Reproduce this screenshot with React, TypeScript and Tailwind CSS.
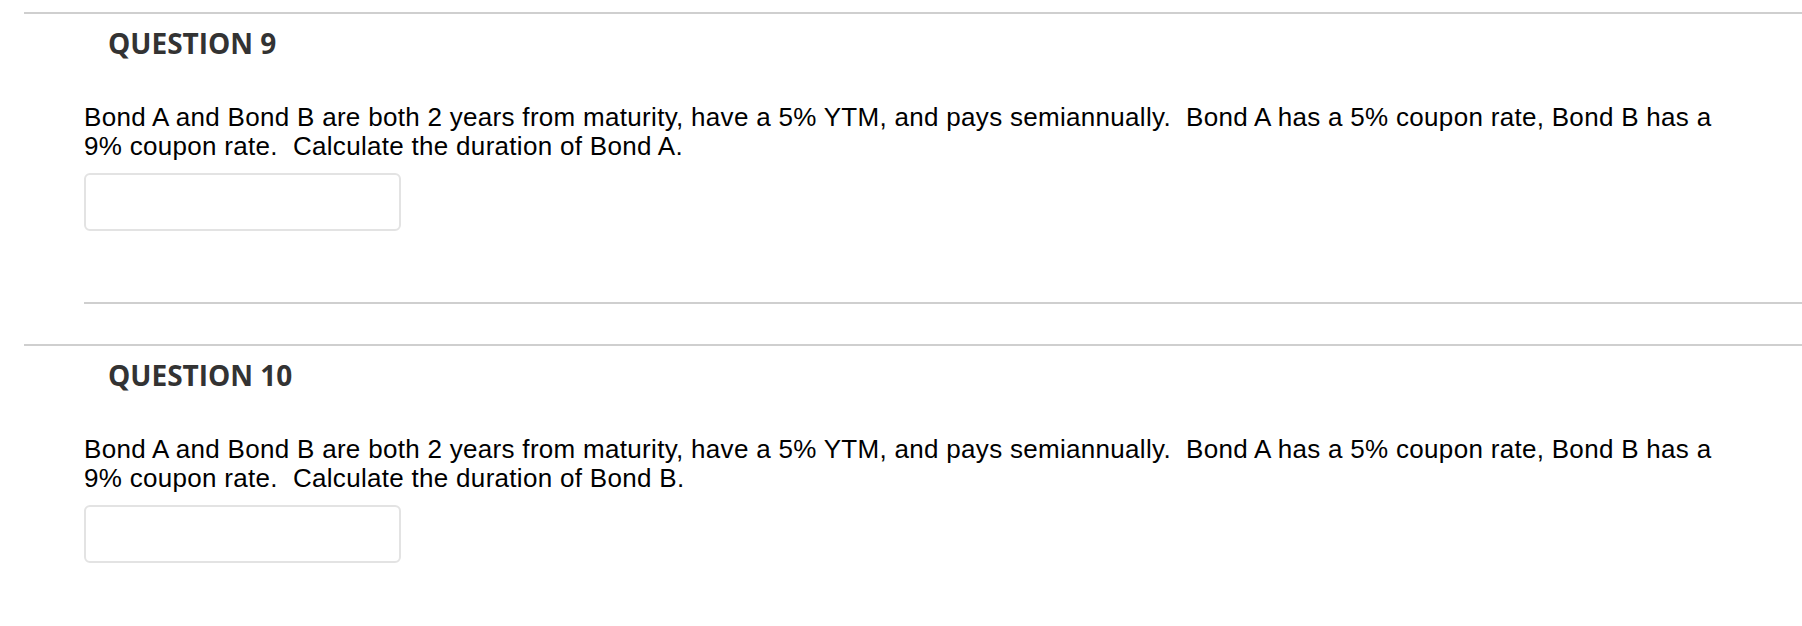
import React from "react";

const questions = [
  { n: 9, bond: "A" },
  { n: 10, bond: "B" },
];

function Question({ n, bond, first }: { n: number; bond: string; first: boolean }) {
  return (
    <section className={`ml-[24px] border-t-2 border-[#cfcfcf] ${first ? "" : "mt-[40px]"}`}>
      <h2 className="ml-[84px] mt-[10px] font-['Open_Sans',sans-serif] text-[28px] leading-[38px] font-bold text-[#333333]">
        QUESTION {n}
      </h2>
      <div className="ml-[60px] mt-[41px] w-[1660px]">
        <p className="font-['Liberation_Sans',Arial,sans-serif] text-[26px] leading-[29px] tracking-[0.3px] text-black">
          Bond A and Bond B are both 2 years from maturity, have a 5% YTM, and pays semiannually.{"\u00a0 "}Bond A has a 5% coupon rate, Bond B has a 9% coupon rate.{"\u00a0 "}Calculate the duration of Bond {bond}.
        </p>
        <input
          type="text"
          aria-label={`Answer to question ${n}`}
          className="mt-[12px] block w-[317px] h-[58px] rounded-[6px] border-2 border-[#e3e3e3] bg-white outline-none"
        />
      </div>
      <div className="ml-[60px] mt-[71px] border-t-2 border-[#cfcfcf]" />
    </section>
  );
}

export default function App() {
  return (
    <div className="min-h-[626px] w-full bg-white pt-[12px]">
      {questions.map((q, i) => (
        <Question key={q.n} n={q.n} bond={q.bond} first={i === 0} />
      ))}
    </div>
  );
}
